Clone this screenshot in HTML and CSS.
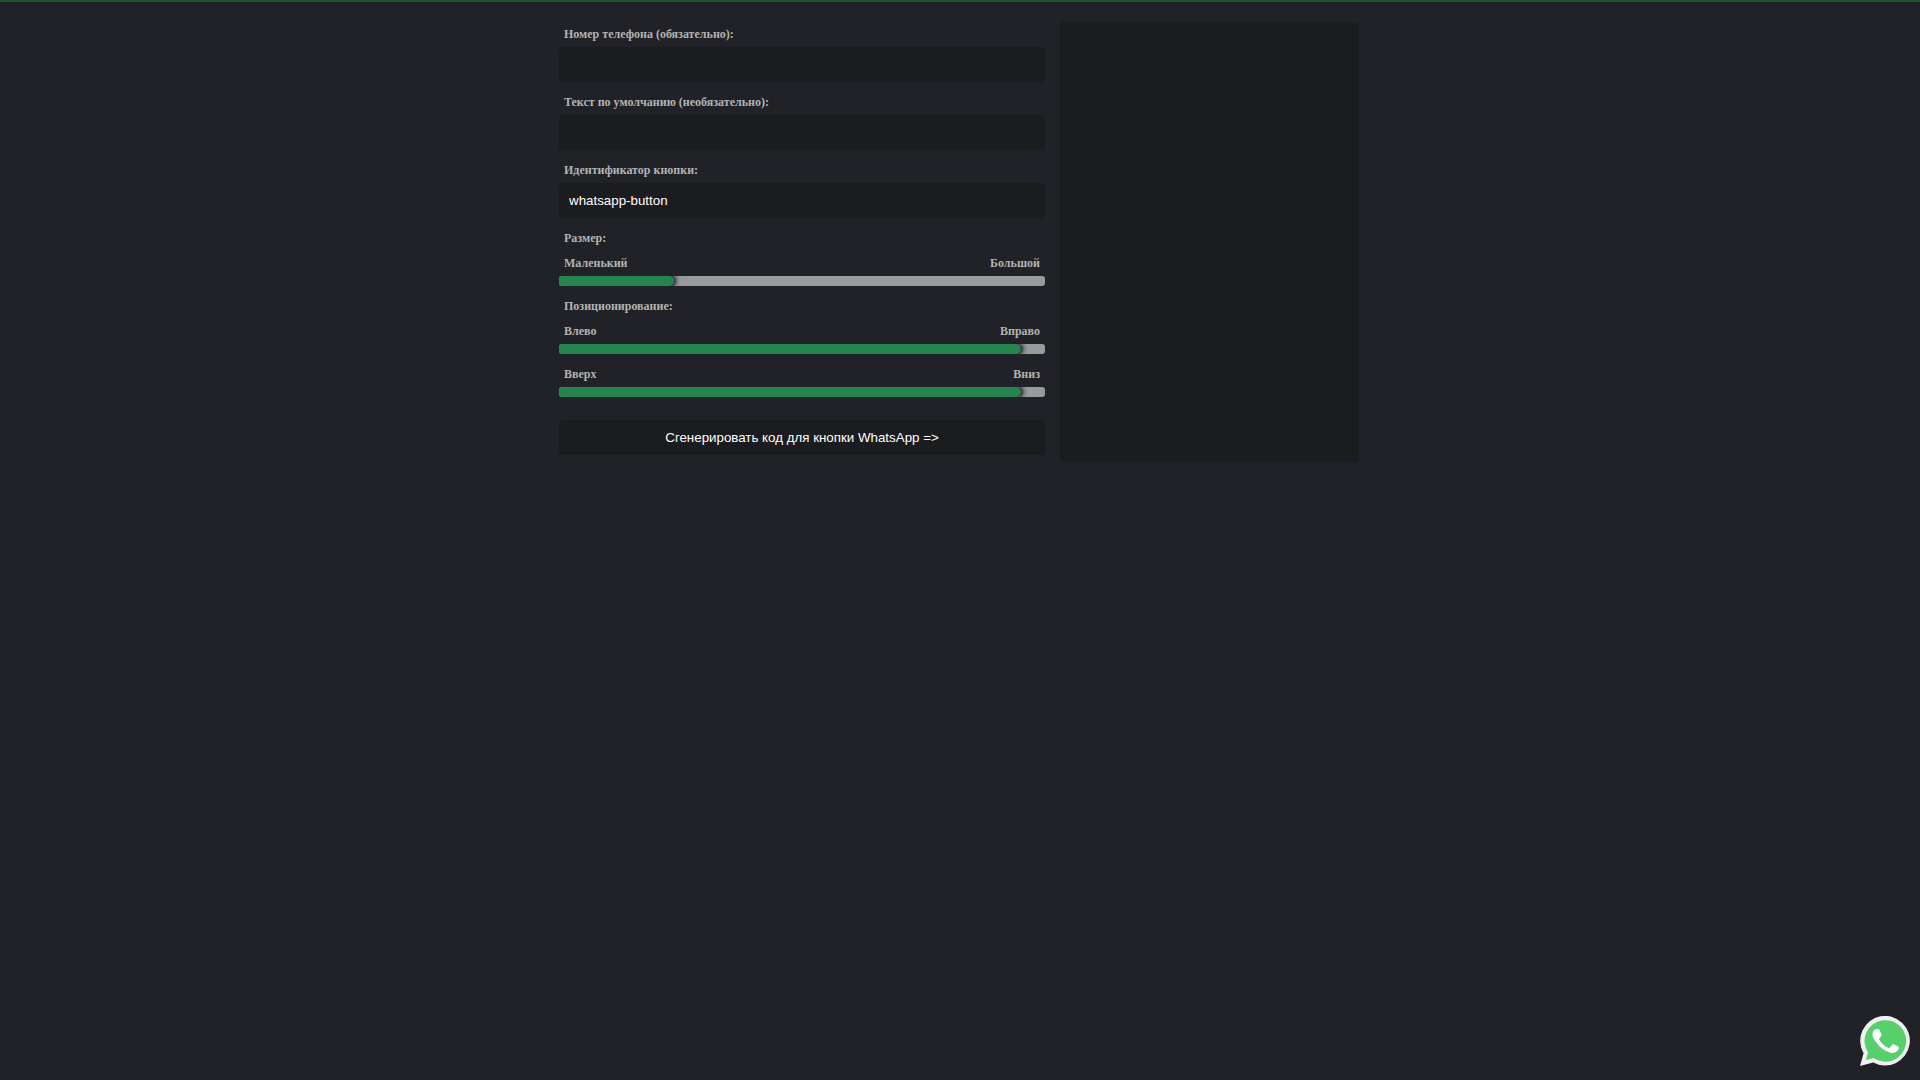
FILE: index.html
```
<!DOCTYPE html>
<html lang="ru">
<head>
    <meta charset="UTF-8">
    <meta name="viewport" content="width=device-width, initial-scale=1.0">
    <title>WhatsApp</title>
    <link rel="stylesheet" href="styles.css">
</head>
<body>
    <main class="generator">
        <form class="settings">
            <div class="field">
                <label for="phone">Номер телефона (обязательно):</label>
                <input class="text-input" type="text" id="phone" required>
            </div>

            <div class="field">
                <label for="text">Текст по умолчанию (необязательно):</label>
                <input class="text-input" type="text" id="text">
            </div>

            <div class="field">
                <label for="button-id">Идентификатор кнопки:</label>
                <input class="text-input" type="text" id="button-id" value="whatsapp-button">
            </div>

            <div class="field">
                <label for="size">Размер:</label>
                <div class="range-labels">
                    <label for="size">Маленький</label>
                    <label for="size">Большой</label>
                </div>
                <input class="range" type="range" id="size" min="0" max="100" value="22">
            </div>

            <div class="field">
                <label for="pos-x">Позиционирование:</label>
                <div class="range-labels">
                    <label for="pos-x">Влево</label>
                    <label for="pos-x">Вправо</label>
                </div>
                <input class="range" type="range" id="pos-x" min="0" max="100" value="95">
            </div>

            <div class="field">
                <div class="range-labels">
                    <label for="pos-y">Вверх</label>
                    <label for="pos-y">Вниз</label>
                </div>
                <input class="range" type="range" id="pos-y" min="0" max="100" value="95">
            </div>

            <button class="generate" type="button">Сгенерировать код для кнопки WhatsApp =&gt;</button>
        </form>

        <textarea class="code" id="code" readonly></textarea>
    </main>

    <a class="whatsapp-button" id="whatsapp-button" href="#">
        <svg viewBox="0 0 50 50" width="50" height="50">
            <path fill="#f0f0f0" d="M0 50L3.6 37.2A24.8 24.8 0 1 1 13.2 46.5Z"/>
            <path fill="#57d06c" d="M5.9 44.1L8 36.4A20.8 20.8 0 1 1 13.6 42.1Z"/>
            <path fill="#fff" d="M13.2 15.4C14.2 13.6 15.6 12.8 17.2 12.9C18.8 12.9 19.2 13.1 19.8 14.5L21.5 18.6C21.8 19.4 21.4 20.2 19.4 22.6C19 23.1 19 23.5 19.4 24.1C21.6 27.7 24.7 30.4 28.5 31.9C29.1 32.2 29.6 32.1 30 31.6L32.3 28.8C32.8 28.1 33.3 28.1 34 28.4L38.2 30.4C39 30.8 38.9 31.5 38.7 32.6C38.1 35.2 35.5 37.1 32.6 36.9C29.5 36.7 24.5 34.6 21.2 31.7C17.7 28.6 14.6 24.7 13.3 21.8C12.2 19.5 12.3 17.2 13.2 15.4Z"/>
        </svg>
    </a>
</body>
</html>
```
FILE: styles.css
```
* {
    box-sizing: border-box;
}

body {
    margin: 0;
    padding: 20px 16px 20px 14px;
    min-height: 100vh;
    background: #212227;
    border-top: 2px solid #1f5233;
    font-family: "Liberation Serif", "Times New Roman", serif;
}

.generator {
    display: flex;
    gap: 15px;
    max-width: 800px;
    margin: 0 auto;
}

.settings {
    flex: 1;
    display: flex;
    flex-direction: column;
    gap: 8px;
    padding-bottom: 7px;
}

.field {
    display: flex;
    flex-direction: column;
}

label {
    padding: 5px;
    color: #b3b3b3;
    font-size: 12px;
    font-weight: bold;
    line-height: 15px;
}

.range-labels {
    display: flex;
    justify-content: space-between;
}

.text-input,
.generate,
.code {
    padding: 10px;
    border: none;
    border-radius: 3px;
    outline: none;
    background: #1b1c20;
    color: #fff;
    font-family: "Liberation Sans", Arial, sans-serif;
}

.text-input,
.generate {
    width: 100%;
    height: 35px;
}

.generate {
    margin-top: 15px;
    cursor: pointer;
}

.code {
    width: 299px;
    resize: none;
}

.range {
    -webkit-appearance: none;
    appearance: none;
    width: 100%;
    height: 10px;
    margin: 0;
    overflow: hidden;
    border-radius: 3px;
    background: #999a9c;
}

/* the filled part is a wide shadow thrown to the left of the thumb */
.range::-webkit-slider-thumb {
    -webkit-appearance: none;
    width: 10px;
    height: 10px;
    border-radius: 5px;
    background: #26854f;
    box-shadow: -1005px 0 0 1000px #26854f, 1px 0 5px 1px #000;
}

.whatsapp-button {
    position: fixed;
    right: 10px;
    bottom: 14px;
    width: 50px;
    height: 50px;
}
```
